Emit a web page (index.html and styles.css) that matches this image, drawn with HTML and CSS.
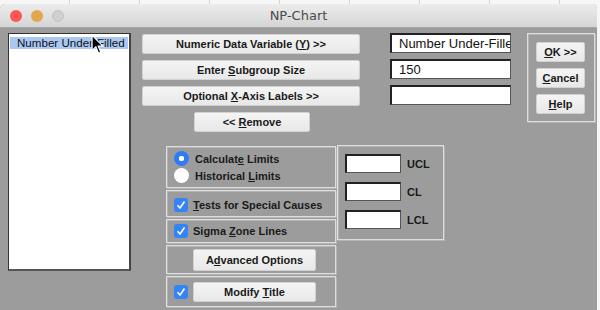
FILE: index.html
```html
<!DOCTYPE html>
<html lang="en">
<head>
  <meta charset="UTF-8" />
  <title>NP-Chart</title>
  <link rel="stylesheet" href="styles.css">
</head>
<body>

<div class="window">
  <div class="titlebar">
    <div class="lights">
      <span class="light red"></span>
      <span class="light amber"></span>
      <span class="light off"></span>
    </div>
    <div class="title">NP-Chart</div>
    <div></div>
  </div>

  <div class="dialog">
    <div class="list">
      <div class="item selected">Number Under-Filled</div>
    </div>

    <div class="main">
      <div class="top">
        <div class="cmds">
          <div class="btn"><span>Numeric Data Variable (<u>Y</u>) &gt;&gt;</span></div>
          <div class="btn"><span>Enter <u>S</u>ubgroup Size</span></div>
          <div class="btn"><span>Optional <u>X</u>-Axis Labels &gt;&gt;</span></div>
          <div class="btn remove"><span>&lt;&lt; <u>R</u>emove</span></div>
        </div>
        <div class="fields">
          <div class="field">Number Under-Filled</div>
          <div class="field">150</div>
          <div class="field"></div>
        </div>
        <div class="group okbox">
          <div class="btn small"><span><u>O</u>K &gt;&gt;</span></div>
          <div class="btn small"><span><u>C</u>ancel</span></div>
          <div class="btn small"><span><u>H</u>elp</span></div>
        </div>
      </div>

      <div class="bottom">
        <div class="opts">
          <div class="group radios">
            <div class="opt"><span class="radio on"></span><span>Calculat<u>e</u> Limits</span></div>
            <div class="opt"><span class="radio"></span><span>Historical <u>L</u>imits</span></div>
          </div>
          <div class="group row tests">
            <span class="check"></span><span><u>T</u>ests for Special Causes</span>
          </div>
          <div class="group row sigma">
            <span class="check"></span><span>Sigma <u>Z</u>one Lines</span>
          </div>
          <div class="group row adv">
            <div class="btn wide"><span>A<u>d</u>vanced Options</span></div>
          </div>
          <div class="group row modify">
            <span class="check"></span>
            <div class="btn wide"><span>Modify <u>T</u>itle</span></div>
          </div>
        </div>

        <div class="group limits">
          <div class="lim"><span class="field short"></span>UCL</div>
          <div class="lim"><span class="field short"></span>CL</div>
          <div class="lim"><span class="field short"></span>LCL</div>
        </div>
      </div>
    </div>
  </div>
</div>

<svg class="cursor" width="13" height="21" viewBox="0 0 12 19">
  <path d="M1 1 L1 15 L4.5 11.5 L7 17.5 L9 16.6 L6.6 11 L11 11 Z" fill="#000" stroke="#fff" stroke-width="1"/>
</svg>

</body>
</html>
```

FILE: styles.css
```css
body {
  margin: 0;
  height: 310px;
  overflow: hidden;
  font-family: "Liberation Sans", Arial, sans-serif;
  background: #f6f6f6 repeating-linear-gradient(90deg, transparent 0 69px, #d4d4d4 69px 70px);
}
.window {
  margin-top: 4px;
  width: 597px;
  height: 306px;
  border-radius: 5px 5px 0 0;
  overflow: hidden;
  background: #9c9c9c;
}
.titlebar {
  height: 23px;
  display: grid;
  grid-template-columns: 1fr auto 1fr;
  align-items: center;
  background: linear-gradient(#ececec, #d5d5d5);
  border-bottom: 1px solid #a8a8a8;
}
.lights {
  display: flex;
  gap: 9px;
  padding-left: 10px;
}
.light {
  width: 12px;
  height: 12px;
  border-radius: 50%;
}
.red { background: #fc5753; }
.amber { background: #e2a74b; }
.off { background: #d0d0d0; border: 1px solid #c2c2c2; box-sizing: border-box; }
.title {
  font-family: "DejaVu Sans", sans-serif;
  font-size: 13px;
  color: #4a4a4a;
}

.dialog {
  display: flex;
  padding: 5px 0 0 8px;
  height: 277px;
}
.list {
  width: 120px;
  height: 232px;
  background: #fff;
  border: 1px solid #888;
  border-top-color: #333;
  border-left-color: #333;
  border-bottom: 2px solid #555;
  border-right: 2px solid #444;
  padding-top: 3px;
}
.item {
  font-size: 11.6px;
  line-height: 12px;
  padding: 0 0 0 7px;
  color: #111;
  white-space: nowrap;
  overflow: hidden;
}
.selected {
  background: #a9c9f4;
  margin: 0 1px;
}

.main {
  margin-left: 11px;
  display: flex;
  flex-direction: column;
}
.top {
  display: flex;
  align-items: flex-start;
  padding-top: 1px;
}
.cmds, .fields {
  display: flex;
  flex-direction: column;
  gap: 6px;
}
.cmds { width: 218px; }
.btn {
  height: 20px;
  box-sizing: border-box;
  background: linear-gradient(#f4f4f4, #e8e8e8);
  border: 1px solid #d2d2d2;
  border-radius: 2px;
  display: flex;
  align-items: center;
  justify-content: center;
  font-size: 11px;
  font-weight: bold;
  color: #1a1a1a;
  white-space: nowrap;
}
.remove {
  width: 116px;
  margin-left: 52px;
}
.fields {
  width: 121px;
  margin-left: 30px;
  margin-top: -1px;
}
.field {
  height: 20px;
  box-sizing: border-box;
  background: #fff;
  border: 1px solid #555;
  border-top: 2px solid #222;
  border-left: 2px solid #222;
  font-size: 13px;
  line-height: 17px;
  padding-left: 7px;
  overflow: hidden;
  white-space: nowrap;
  color: #111;
}

.group {
  box-sizing: border-box;
  border: 1px solid #dedede;
  box-shadow: inset 1px 1px 0 #b4b4b4, 1px 1px 0 #b4b4b4;
}
.okbox {
  margin-left: 16px;
  margin-top: -1px;
  width: 68px;
  height: 89px;
  padding: 8px 0 0 8px;
  display: flex;
  flex-direction: column;
  gap: 6px;
}
.small { width: 49px; }

.bottom {
  display: flex;
  align-items: flex-start;
  margin: 14px 0 0 24px;
}
.opts {
  width: 170px;
  display: flex;
  flex-direction: column;
  gap: 2px;
}
.radios {
  height: 42px;
  padding: 3px 0 0 7px;
}
.opt {
  display: flex;
  align-items: center;
  height: 17px;
  font-size: 11px;
  font-weight: bold;
  color: #1a1a1a;
}
.radio {
  width: 15px;
  height: 15px;
  border-radius: 50%;
  background: #fff;
  margin-right: 6px;
  flex: none;
}
.radio.on {
  background: radial-gradient(circle, #fff 0 2.5px, #2f7bf6 3px);
}
.row {
  display: flex;
  align-items: center;
  padding-left: 7px;
  font-size: 11px;
  font-weight: bold;
  color: #1a1a1a;
}
.tests { height: 27px; padding-top: 3px; }
.sigma { height: 24px; }
.adv { height: 29px; }
.modify { height: 31px; }
.check {
  width: 14px;
  height: 14px;
  border-radius: 3px;
  background: #3484f7 url("data:image/svg+xml;utf8,<svg xmlns='http://www.w3.org/2000/svg' width='14' height='14'><path d='M3.5 7.2 L6 10 L10.5 3.5' fill='none' stroke='white' stroke-width='1.6'/></svg>") center no-repeat;
  margin-right: 5px;
  flex: none;
}
.wide {
  width: 123px;
  height: 22px;
  margin-left: 19px;
}
.modify .wide {
  height: 20px;
  margin-left: 0;
}

.limits {
  width: 107px;
  height: 95px;
  margin-left: 1px;
  margin-top: -1px;
  padding: 8px 0 0 7px;
  display: flex;
  flex-direction: column;
  gap: 9px;
}
.lim {
  display: flex;
  align-items: center;
  font-size: 11px;
  font-weight: bold;
  color: #1a1a1a;
}
.short {
  width: 56px;
  height: 19px;
  margin-right: 6px;
}

.cursor {
  position: absolute;
  left: 91px;
  top: 34px;
}
```
